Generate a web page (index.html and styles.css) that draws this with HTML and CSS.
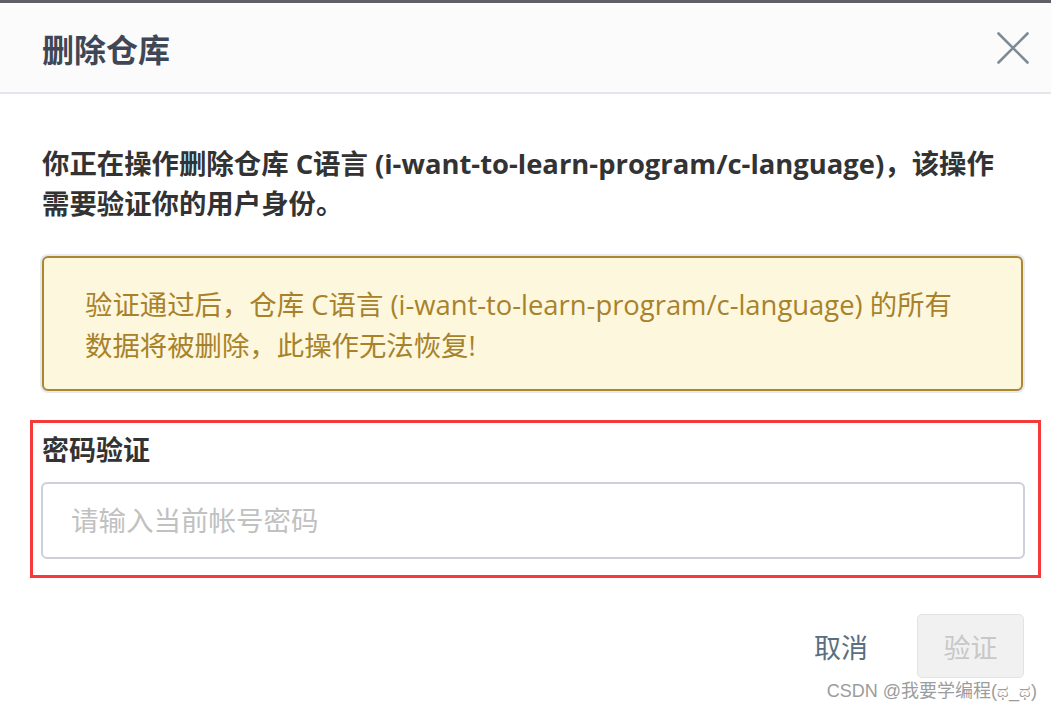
FILE: index.html
```html
<!DOCTYPE html>
<html lang="zh-CN">
<head>
<meta charset="utf-8">
<title>删除仓库</title>
<link rel="stylesheet" href="styles.css">
</head>
<body>
<div class="topbar"></div>
<header class="modal-header">
  <h1 class="modal-title">删除仓库</h1>
  <button class="close-btn" aria-label="关闭">
    <svg width="32" height="32" viewBox="0 0 32 32"><path d="M1.5 1.5 L30.5 30.5 M30.5 1.5 L1.5 30.5" stroke="#7e8b95" stroke-width="2.6" stroke-linecap="round" fill="none"/></svg>
  </button>
</header>
<main class="modal-body">
  <p class="desc">你正在操作删除仓库 C语言 (i-want-to-learn-program/c-language)，该操作需要验证你的用户身份。</p>
  <div class="alert">验证通过后，仓库 C语言 (i-want-to-learn-program/c-language) 的所有数据将被删除，此操作无法恢复!</div>
  <div class="field">
    <label class="field-label" for="pwd">密码验证</label>
    <input id="pwd" class="field-input" type="password" placeholder="请输入当前帐号密码">
  </div>
</main>
<footer class="modal-footer">
  <button class="btn-cancel">取消</button>
  <button class="btn-confirm" disabled>验证</button>
</footer>
<div class="watermark">CSDN @我要学编程(ಥ_ಥ)</div>
</body>
</html>
```
FILE: styles.css
```css
html, body {
  margin: 0;
  padding: 0;
  background: #ffffff;
}
body {
  font-family: "Open Sans", "Noto Sans CJK SC", sans-serif;
  color: #333333;
  position: relative;
  width: 1051px;
  height: 711px;
  overflow: hidden;
}
.topbar {
  height: 3px;
  background: #5e5f67;
}
.modal-header {
  height: 89px;
  background: #fbfbfb;
  border-bottom: 2px solid #e3e6ea;
  display: flex;
  align-items: center;
  justify-content: space-between;
  padding: 0 22px 0 42px;
}
.modal-title {
  margin: 0;
  font-size: 32px;
  font-weight: 700;
  color: #3f4757;
  line-height: 1;
  font-family: "Noto Sans CJK SC", sans-serif;
}
.close-btn {
  border: 0;
  background: none;
  padding: 0;
  width: 32px;
  height: 32px;
  cursor: pointer;
  display: flex;
}
.modal-body {
  padding: 0 28px 0 42px;
}
.desc {
  margin: 50px 22px 0 0;
  font-size: 27.4px;
  font-weight: 700;
  line-height: 40px;
  color: #333333;
}
.alert {
  margin-top: 32px;
  border: 2px solid #ab872f;
  border-radius: 6px;
  background: #fdf7de;
  box-shadow: 0 0 0 2px #e6e9ee;
  padding: 26px 60px 23px 41px;
  font-size: 27.4px;
  line-height: 41px;
  color: #a8822b;
}
.field {
  margin: 29px -18px 0 -12px;
  border: 3px solid #f53a3a;
  padding: 7px 13px 16px 8px;
  display: flex;
  flex-direction: column;
}
.field-label {
  font-size: 27px;
  font-weight: 700;
  line-height: 40px;
  color: #333333;
  padding-left: 1px;
}
.field-input {
  margin-top: 12px;
  height: 77px;
  box-sizing: border-box;
  border: 2px solid #cfcfdb;
  border-radius: 6px;
  padding: 0 20px 0 28px;
  font-family: "Open Sans", "Noto Sans CJK SC", sans-serif;
  font-size: 27.5px;
  color: #333333;
  outline: none;
}
.field-input::placeholder {
  color: #c1c1c1;
}
.modal-footer {
  margin-top: 36px;
  display: flex;
  justify-content: flex-end;
  align-items: center;
  padding-right: 27px;
}
.btn-cancel {
  border: 0;
  background: none;
  font-family: "Noto Sans CJK SC", sans-serif;
  font-size: 27px;
  color: #5a6e80;
  padding: 0 24px;
  margin-right: 25px;
  margin-top: 0;
  cursor: pointer;
}
.btn-confirm {
  width: 107px;
  height: 64px;
  border: 1px solid #e3e3e3;
  border-radius: 5px;
  background: #f1f1f1;
  font-family: "Noto Sans CJK SC", sans-serif;
  font-size: 27px;
  color: #c8c8c8;
  padding: 0;
}
.watermark {
  position: absolute;
  right: 14px;
  bottom: 9px;
  font-family: "Liberation Sans", "Noto Sans CJK SC", sans-serif;
  font-size: 18px;
  color: #9c9c9c;
  text-shadow: 0 0 2px #ffffff;
}
```
